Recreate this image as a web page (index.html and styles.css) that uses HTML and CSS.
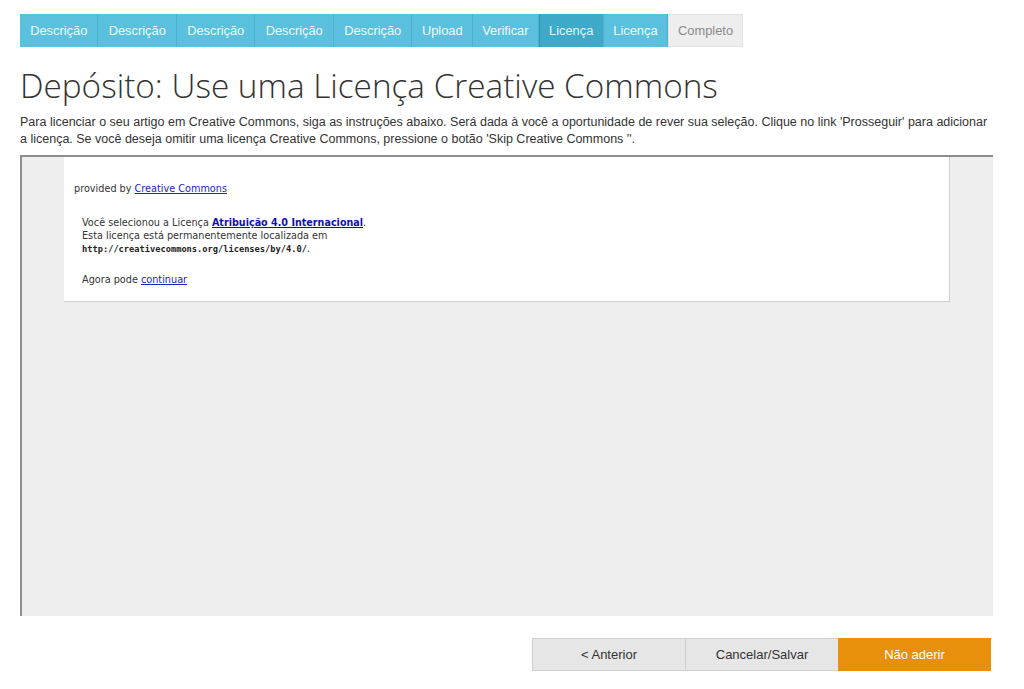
FILE: index.html
```html
<!DOCTYPE html>
<html lang="pt">
<head>
<meta charset="utf-8">
<title>Depósito</title>
<link rel="stylesheet" href="styles.css">
</head>
<body>
<div class="page">
  <nav class="steps">
    <span class="step done">Descrição</span>
    <span class="step done">Descrição</span>
    <span class="step done">Descrição</span>
    <span class="step done">Descrição</span>
    <span class="step done">Descrição</span>
    <span class="step done short">Upload</span>
    <span class="step done tight">Verificar</span>
    <span class="step active short">Licença</span>
    <span class="step done short">Licença</span>
    <span class="step todo">Completo</span>
  </nav>
  <h1 class="title">Depósito: Use uma Licença Creative Commons</h1>
  <p class="intro">Para licenciar o seu artigo em Creative Commons, siga as instruções abaixo. Será dada à você a oportunidade de rever sua seleção. Clique no link 'Prosseguir' para adicionar a licença. Se você deseja omitir uma licença Creative Commons, pressione o botão 'Skip Creative Commons ''.</p>
  <div class="frame">
    <div class="cc-box">
      <p class="provided">provided by <a href="#" class="link">Creative Commons</a></p>
      <div class="selected">
        <p>Você selecionou a Licença <a href="#" class="link strong">Atribuição 4.0 Internacional</a>.<br>Esta licença está permanentemente localizada em<br><span class="mono">http://creativecommons.org/licenses/by/4.0/</span>.</p>
        <p class="next">Agora pode <a href="#" class="link">continuar</a></p>
      </div>
    </div>
  </div>
  <div class="actions">
    <button class="btn btn-default">&lt; Anterior</button>
    <button class="btn btn-default">Cancelar/Salvar</button>
    <button class="btn btn-warning">Não aderir</button>
  </div>
</div>
</body>
</html>
```
FILE: styles.css
```css
html, body {
  margin: 0;
  padding: 0;
  background: #fff;
}
.page {
  padding: 14px 31px 0 20px;
  font-family: "Liberation Sans", Arial, sans-serif;
  color: #333;
}
.steps {
  display: flex;
  height: 33px;
}
.step {
  display: flex;
  align-items: center;
  padding: 0 10.2px;
  font-size: 12.85px;
  border-right: 1px solid #4bb3d1;
}
.step.done {
  background: #5bc0de;
  color: #eef9fc;
}
.step.active {
  background: #3fa9c9;
  color: #e4f4f9;
  border-left: 1px solid #2f95b5;
}
.step.short {
  padding: 0 9.5px;
}
.step.tight {
  padding: 0 9px;
}
.step.todo {
  background: #eeeeee;
  color: #8a8a8a;
  border: 1px solid #e2e2e2;
  padding: 0 9px;
}
.title {
  margin: 18px 0 0;
  font-family: "Open Sans", sans-serif;
  font-weight: 300;
  font-size: 33.3px;
  line-height: 40px;
  color: #333;
}
.intro {
  margin: 9px 0 0;
  font-size: 12.5px;
  line-height: 17px;
}
.frame {
  margin-top: 7px;
  height: 459px;
  background: #eeeeee;
  border-top: 2px solid #8e8e8e;
  border-left: 2px solid #8e8e8e;
  padding: 0 43px 0 42px;
}
.cc-box {
  background: #fff;
  border-right: 1px solid #cfcfcf;
  border-bottom: 1px solid #cfcfcf;
  height: 144px;
  padding: 0 10px;
  font-family: "DejaVu Sans", Verdana, sans-serif;
  font-size: 9.7px;
  color: #333;
}
.provided {
  margin: 0;
  padding-top: 25px;
  line-height: 13px;
}
.selected {
  padding: 0 8px;
}
.selected p {
  margin: 21px 0 0;
  line-height: 13px;
}
.selected p.next {
  margin-top: 17px;
}
.link {
  color: #2222cc;
  text-decoration: underline;
}
.strong {
  font-weight: bold;
  color: #1111aa;
  font-size: 9.6px;
}
.mono {
  font-family: "DejaVu Sans Mono", monospace;
  font-size: 8.7px;
  font-weight: bold;
  color: #222;
}
.actions {
  display: flex;
  justify-content: flex-end;
  margin: 22px 2px 0 0;
}
.btn {
  width: 153px;
  height: 33px;
  font-family: "Liberation Sans", Arial, sans-serif;
  font-size: 13px;
  border: 1px solid #cfcfcf;
  margin: 0;
  padding: 0;
}
.btn-default {
  background: #e6e6e6;
  color: #333;
  border-right: none;
}
.btn-warning {
  background: #e8900c;
  border-color: #e8900c;
  color: #fff;
}
```
